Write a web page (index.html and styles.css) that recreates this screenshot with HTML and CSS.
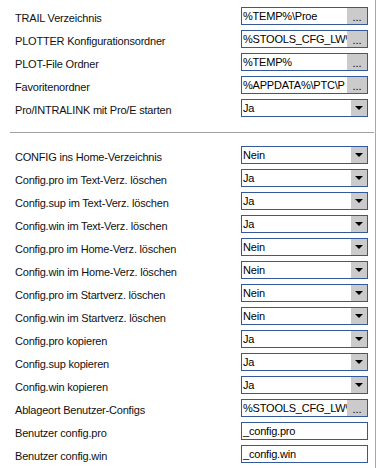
FILE: index.html
```html
<!DOCTYPE html>
<html>
<head>
<meta charset="utf-8">
<link rel="stylesheet" href="styles.css">
</head>
<body>
<div class="panel">
  <div class="section first">
    <div class="row"><span class="label">TRAIL Verzeichnis</span><div class="field"><span class="value">%TEMP%\Proe</span><span class="btn dots">...</span></div></div>
    <div class="row"><span class="label">PLOTTER Konfigurationsordner</span><div class="field"><span class="value">%STOOLS_CFG_LW%</span><span class="btn dots">...</span></div></div>
    <div class="row"><span class="label">PLOT-File Ordner</span><div class="field"><span class="value">%TEMP%</span><span class="btn dots">...</span></div></div>
    <div class="row"><span class="label">Favoritenordner</span><div class="field"><span class="value">%APPDATA%\PTC\P</span><span class="btn dots">...</span></div></div>
    <div class="row"><span class="label">Pro/INTRALINK mit Pro/E starten</span><div class="field"><span class="value">Ja</span><span class="btn drop"><i class="arrow"></i></span></div></div>
  </div>
  <div class="separator"></div>
  <div class="section">
    <div class="row"><span class="label">CONFIG ins Home-Verzeichnis</span><div class="field"><span class="value">Nein</span><span class="btn drop"><i class="arrow"></i></span></div></div>
    <div class="row"><span class="label">Config.pro im Text-Verz. löschen</span><div class="field"><span class="value">Ja</span><span class="btn drop"><i class="arrow"></i></span></div></div>
    <div class="row"><span class="label">Config.sup im Text-Verz. löschen</span><div class="field"><span class="value">Ja</span><span class="btn drop"><i class="arrow"></i></span></div></div>
    <div class="row"><span class="label">Config.win im Text-Verz. löschen</span><div class="field"><span class="value">Ja</span><span class="btn drop"><i class="arrow"></i></span></div></div>
    <div class="row"><span class="label">Config.pro im Home-Verz. löschen</span><div class="field"><span class="value">Nein</span><span class="btn drop"><i class="arrow"></i></span></div></div>
    <div class="row"><span class="label">Config.win im Home-Verz. löschen</span><div class="field"><span class="value">Nein</span><span class="btn drop"><i class="arrow"></i></span></div></div>
    <div class="row"><span class="label">Config.pro im Startverz. löschen</span><div class="field"><span class="value">Nein</span><span class="btn drop"><i class="arrow"></i></span></div></div>
    <div class="row"><span class="label">Config.win im Startverz. löschen</span><div class="field"><span class="value">Nein</span><span class="btn drop"><i class="arrow"></i></span></div></div>
    <div class="row"><span class="label">Config.pro kopieren</span><div class="field"><span class="value">Ja</span><span class="btn drop"><i class="arrow"></i></span></div></div>
    <div class="row"><span class="label">Config.sup kopieren</span><div class="field"><span class="value">Ja</span><span class="btn drop"><i class="arrow"></i></span></div></div>
    <div class="row"><span class="label">Config.win kopieren</span><div class="field"><span class="value">Ja</span><span class="btn drop"><i class="arrow"></i></span></div></div>
    <div class="row"><span class="label">Ablageort Benutzer-Configs</span><div class="field"><span class="value">%STOOLS_CFG_LW%</span><span class="btn dots">...</span></div></div>
    <div class="row"><span class="label">Benutzer config.pro</span><div class="field"><span class="value">_config.pro</span></div></div>
    <div class="row"><span class="label">Benutzer config.win</span><div class="field"><span class="value">_config.win</span></div></div>
  </div>
</div>
</body>
</html>
```
FILE: styles.css
```css
html, body {
  margin: 0;
  padding: 0;
  background: #ffffff;
}
body {
  width: 383px;
  height: 468px;
  overflow: hidden;
  font-family: "Liberation Sans", Arial, sans-serif;
  font-size: 11px;
  color: #000000;
}
.panel {
  width: 375px;
  height: 468px;
  border-right: 1px solid #a7a7a7;
  box-sizing: content-box;
}
.section {
  display: flex;
  flex-direction: column;
}
.section.first {
  padding-top: 7px;
}
.row {
  display: grid;
  grid-template-columns: 226px 127px;
  height: 23px;
  padding-left: 15px;
}
.label {
  padding-top: 5px;
  line-height: 13px;
  white-space: nowrap;
  letter-spacing: -0.2px;
  color: #111111;
}
.field {
  box-sizing: border-box;
  height: 18px;
  border: 1px solid #33599b;
  display: flex;
  background: #ffffff;
  overflow: hidden;
}
.value {
  flex: 1;
  min-width: 0;
  overflow: hidden;
  white-space: nowrap;
  padding-left: 1px;
  line-height: 16px;
  letter-spacing: -0.2px;
}
.btn {
  background: #cbcbcb;
  flex: none;
  display: flex;
  align-items: center;
  justify-content: center;
}
.dots {
  width: 20px;
  line-height: 16px;
  padding-top: 2px;
  box-sizing: border-box;
  font-size: 11px;
  color: #000000;
}
.drop {
  width: 16px;
}
.arrow {
  display: block;
  width: 0;
  height: 0;
  border-left: 4px solid transparent;
  border-right: 4px solid transparent;
  border-top: 4px solid #000000;
}
.separator {
  margin: 10px 1px 13px 10px;
  height: 1px;
  background: #a0a0a0;
}
```
